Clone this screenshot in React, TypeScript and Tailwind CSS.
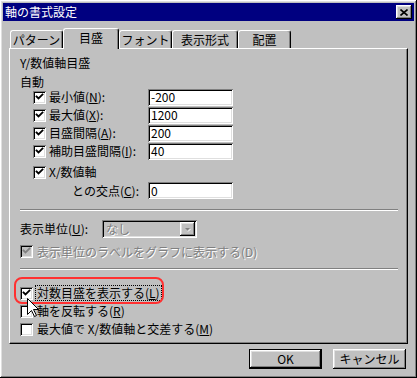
import type { ReactNode } from "react";

const raised =
  "shadow-[inset_-1px_-1px_#000000,inset_1px_1px_#ffffff,inset_-2px_-2px_#808080,inset_2px_2px_#dfdfdf]";
const sunken =
  "shadow-[inset_1px_1px_#808080,inset_-1px_-1px_#ffffff,inset_2px_2px_#000000,inset_-2px_-2px_#dfdfdf]";

function Check({ checked, disabled }: { checked?: boolean; disabled?: boolean }) {
  return (
    <div
      className={`relative w-[13px] h-[13px] shrink-0 ${sunken} ${disabled ? "bg-[#c0c0c0]" : "bg-white"}`}
    >
      {checked && (
        <svg width="13" height="13" viewBox="0 0 13 13" className="absolute left-0 top-0">
          <path
            d="M3.5 5.5 L5.5 7.5 L9.5 3.5"
            fill="none"
            stroke={disabled ? "#808080" : "#000000"}
            strokeWidth="1.8"
            strokeLinecap="square"
          />
        </svg>
      )}
    </div>
  );
}

function Field({ value }: { value: string }) {
  return (
    <div className={`w-[85px] h-[17px] bg-white pl-[3px] flex items-center ${sunken}`}>
      {value}
    </div>
  );
}

function AutoRow({ label, value }: { label: ReactNode; value: string }) {
  return (
    <div className="flex h-[18px] items-center">
      <div className="flex w-[128px] items-center pl-[13px]">
        <Check checked />
        <span className="ml-[3px]">{label}</span>
      </div>
      <Field value={value} />
    </div>
  );
}

function Tab({ label, w, active }: { label: string; w: string; active?: boolean }) {
  return (
    <div
      className={`${w} ${
        active ? "h-[21px] mb-[-1px] z-10 pb-[3px]" : "h-[18px]"
      } relative flex items-center justify-center bg-[#c0c0c0] border-t border-l border-white border-r border-r-black rounded-t-[3px] shadow-[inset_-1px_0_#808080]`}
    >
      {label}
    </div>
  );
}

function Sep() {
  return <div className="h-[2px] border-t border-[#808080] border-b border-b-white" />;
}

function Button({ label, isDefault }: { label: string; isDefault?: boolean }) {
  return (
    <div className={`w-[73px] h-[20px] ${isDefault ? "border border-black" : ""}`}>
      <div className={`w-full h-full flex items-center justify-center bg-[#c0c0c0] ${raised}`}>
        {label}
      </div>
    </div>
  );
}

export default function App() {
  return (
    <div
      className={`relative w-[417px] h-[378px] bg-[#c0c0c0] p-[3px] text-[12px] leading-[14px] text-black ${raised}`}
      style={{ fontFamily: '"Noto Sans CJK JP", "Noto Sans", sans-serif' }}
    >
      {/* title bar */}
      <div className="h-[18px] bg-[#000080] flex items-center justify-between pl-[2px] pr-[2px]">
        <span className="text-white text-[12px]">軸の書式設定</span>
        <div className={`w-[16px] h-[14px] bg-[#c0c0c0] flex items-center justify-center ${raised}`}>
          <svg width="8" height="7" viewBox="0 0 8 7">
            <path d="M0.5 0.5 L7.5 6.5 M7.5 0.5 L0.5 6.5" stroke="#000" strokeWidth="1.6" />
          </svg>
        </div>
      </div>

      <div className="px-[6px] mt-[7px]">
        {/* tabs */}
        <div className="h-[20px] flex items-end pl-[1px]">
          <Tab label="パターン" w="w-[53px]" />
          <Tab label="目盛" w="w-[56px]" active />
          <Tab label="フォント" w="w-[53px]" />
          <Tab label="表示形式" w="w-[66px]" />
          <Tab label="配置" w="w-[53px]" />
        </div>

        {/* panel */}
        <div className="h-[296px] border-t border-l border-white border-r border-b border-r-black border-b-black shadow-[inset_-1px_-1px_#808080] pl-[10px] pr-[9px] pt-[7px]">
          <div>Y/数値軸目盛</div>
          <div className="mt-[5px]">自動</div>
          <div className="mt-[-1px]">
            <AutoRow label={<>最小値(<u>N</u>):</>} value="-200" />
            <AutoRow label={<>最大値(<u>X</u>):</>} value="1200" />
            <AutoRow label={<>目盛間隔(<u>A</u>):</>} value="200" />
            <AutoRow label={<>補助目盛間隔(<u>I</u>):</>} value="40" />
            <div className="flex h-[20px] items-center pl-[13px] mt-[2px]">
              <Check checked />
              <span className="ml-[3px]">X/数値軸</span>
            </div>
            <div className="flex h-[17px] items-center">
              <div className="w-[128px] pl-[52px]">
                との交点(<u>C</u>):
              </div>
              <Field value="0" />
            </div>
          </div>

          <div className="mt-[10px]">
            <Sep />
          </div>

          <div className="flex h-[18px] items-center mt-[9px]">
            <span className="w-[82px]">
              表示単位(<u>U</u>):
            </span>
            <div className={`w-[95px] h-[18px] bg-[#c0c0c0] flex items-center justify-between pl-[4px] pr-[2px] ${sunken}`}>
              <span className="text-[#808080] [text-shadow:1px_1px_#ffffff]">なし</span>
              <div className={`w-[15px] h-[14px] bg-[#c0c0c0] flex items-center justify-center ${raised}`}>
                <svg width="7" height="5" viewBox="0 0 7 5">
                  <path d="M1 1 L6 1 L3.5 3.5 Z" fill="#808080" />
                  <path d="M4 4.5 L6.5 2" stroke="#ffffff" strokeWidth="1" />
                </svg>
              </div>
            </div>
          </div>

          <div className="flex h-[17px] items-center mt-[5px]">
            <Check checked disabled />
            <span className="ml-[4px] text-[#808080] [text-shadow:1px_1px_#ffffff]">
              表示単位のラベルをグラフに表示する(D)
            </span>
          </div>

          <div className="mt-[8px]">
            <Sep />
          </div>

          <div className="mt-[14px]">
            <div className="flex h-[18px] items-center">
              <Check checked />
              <span className="ml-[2px] px-[1px] border border-dotted border-black leading-[14px]">
                対数目盛を表示する(<u>L</u>)
              </span>
            </div>
            <div className="flex h-[18px] items-center">
              <Check />
              <span className="ml-[4px]">
                軸を反転する(<u>R</u>)
              </span>
            </div>
            <div className="flex h-[18px] items-center">
              <Check />
              <span className="ml-[4px]">
                最大値で X/数値軸と交差する(<u>M</u>)
              </span>
            </div>
          </div>
        </div>

        {/* buttons */}
        <div className="flex justify-end gap-[11px] mt-[5px] pr-[2px]">
          <Button label="OK" isDefault />
          <Button label="キャンセル" />
        </div>
      </div>

      {/* highlight ring */}
      <div className="absolute left-[14px] top-[277px] w-[150px] h-[27px] border-2 border-[#ff3030] rounded-[8px] pointer-events-none" />

      {/* mouse cursor */}
      <svg
        width="13"
        height="20"
        viewBox="0 0 13 20"
        className="absolute left-[27px] top-[298px] pointer-events-none"
      >
        <path
          d="M0.5 0.5 L0.5 16.5 L4.5 12.5 L7.5 18.5 L9.5 17.5 L6.5 11.5 L11.5 11.5 Z"
          fill="#ffffff"
          stroke="#000000"
          strokeWidth="1"
        />
      </svg>
    </div>
  );
}
